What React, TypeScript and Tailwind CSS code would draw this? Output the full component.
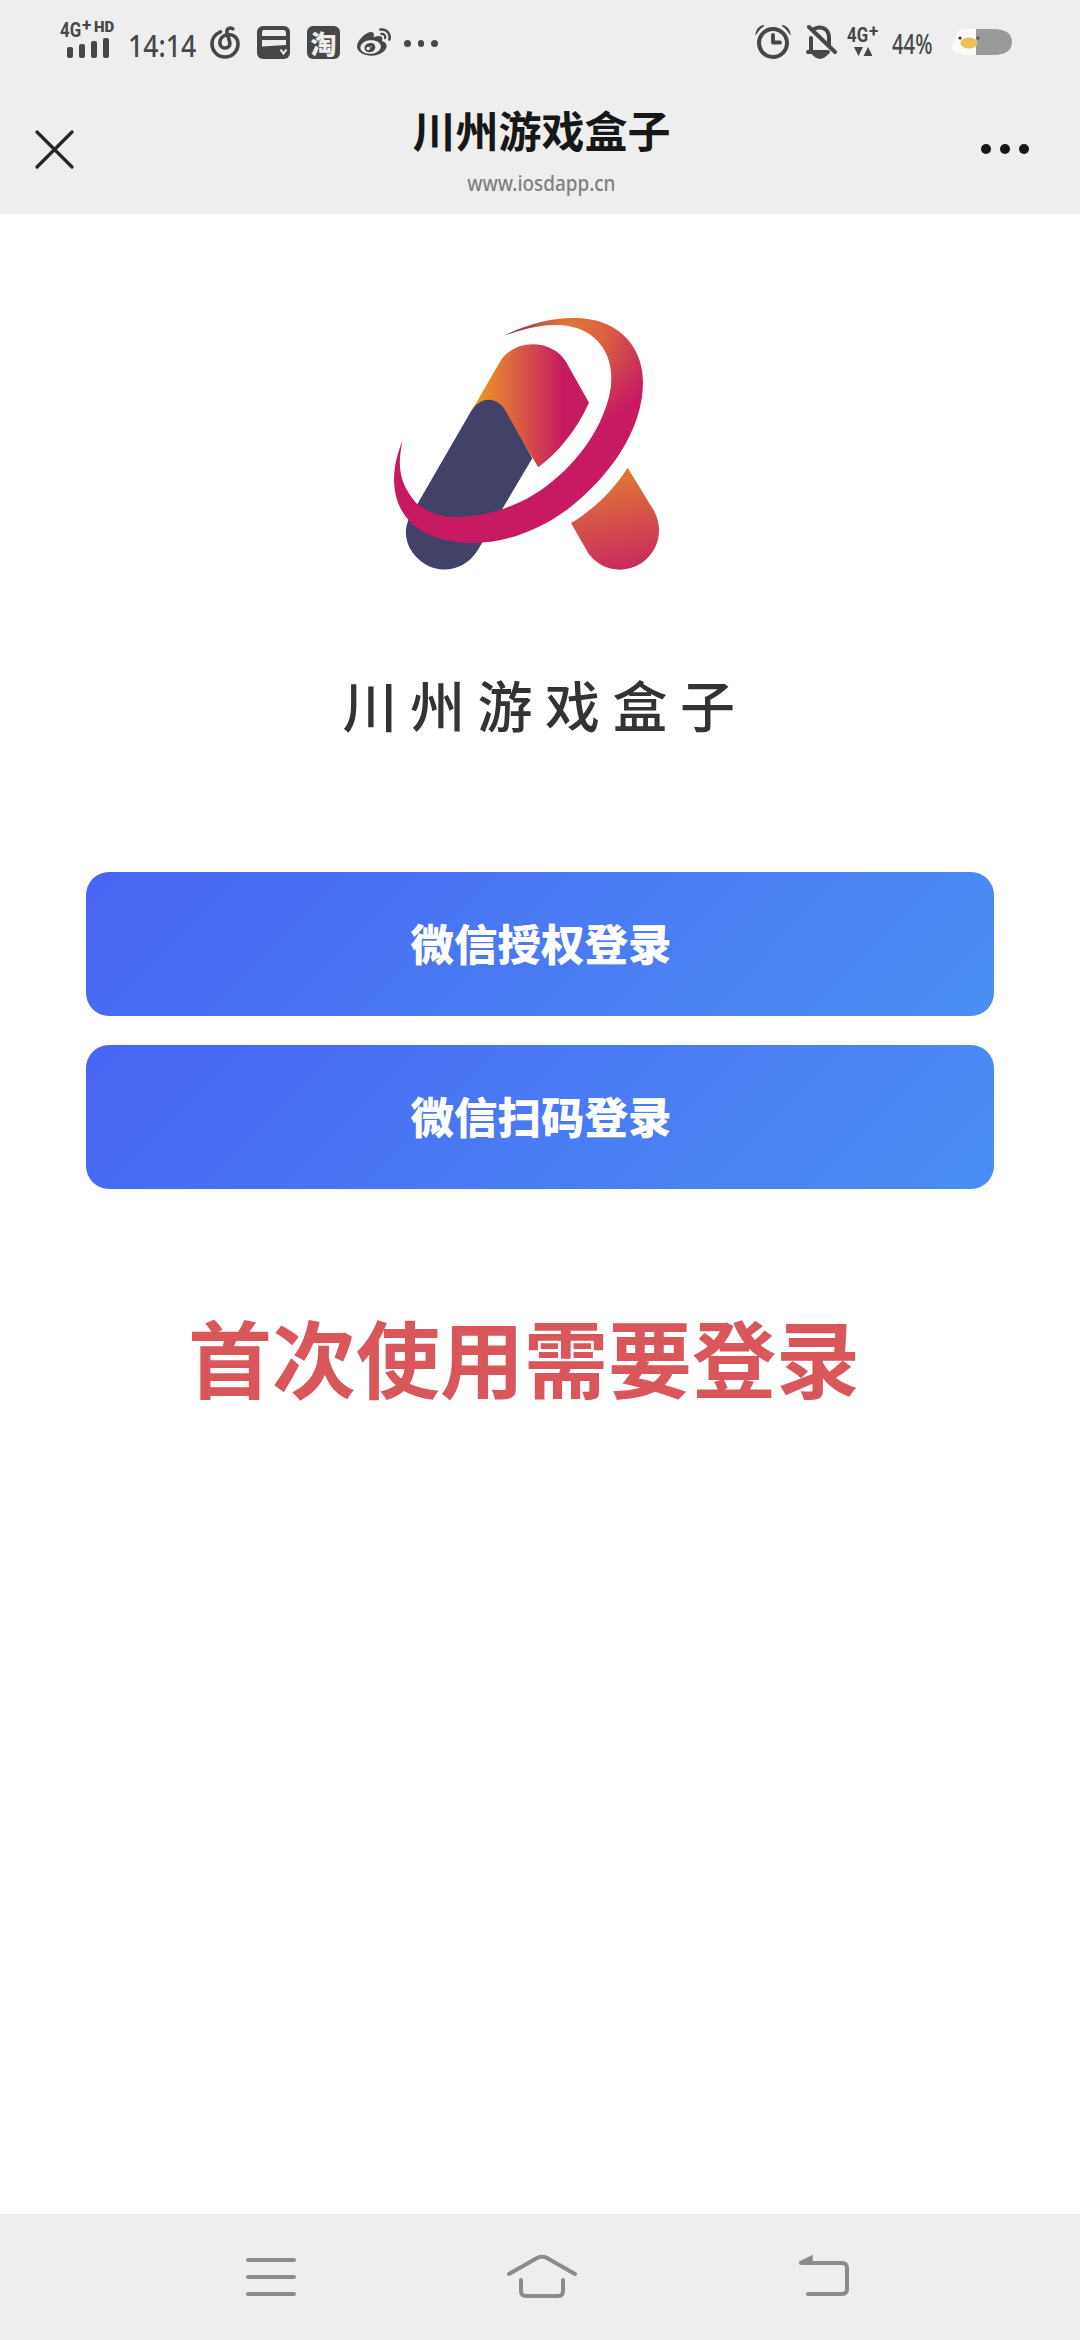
import { FC, ReactNode } from "react";
import { FaWeibo } from "react-icons/fa";

const hand = "font-['Noto_Sans_CJK_SC',sans-serif]";

const loginOptions = [{ label: "微信授权登录" }, { label: "微信扫码登录" }];

const SignalIcon: FC = () => (
  <svg width="42" height="20" viewBox="0 0 42 20" fill="#474747">
    <rect x="0" y="9" width="6" height="11" rx="2" />
    <rect x="12" y="6" width="6" height="14" rx="2" />
    <rect x="24" y="3" width="6" height="17" rx="2" />
    <rect x="36" y="0" width="6" height="20" rx="2" />
  </svg>
);

const MusicIcon: FC = () => (
  <svg
    width="30"
    height="33"
    viewBox="0 0 30 33"
    fill="none"
    stroke="#474747"
    strokeWidth="3.600"
    strokeLinecap="round"
  >
    <path d="M10.500 5.800C5 8 2 13 2 18A13 13 0 0 0 28 18C28 11.500 23 8 18 8.500C13 9 9.800 12.500 9.800 16.500C9.800 20 12 22 15 22C18.500 22 20.300 19.500 19.800 16.500L17 6.500C16.200 3 19.500 .900 22.800 2.800" />
  </svg>
);

const CardIcon: FC = () => (
  <svg width="33" height="33" viewBox="0 0 33 33">
    <rect width="33" height="33" rx="6" fill="#474747" />
    <path d="M7 4h19q3 0 3 3v3H5V7q0-3 2-3zM5 14h24v5L5 20.500z" fill="#eee" />
    <path d="M23.500 23.500l3 4 3-4" stroke="#eee" strokeWidth="2" fill="none" />
  </svg>
);

const AlarmIcon: FC = () => (
  <svg
    width="36"
    height="36"
    viewBox="0 0 36 36"
    fill="none"
    stroke="#474747"
    strokeWidth="4"
    strokeLinecap="round"
  >
    <circle cx="18" cy="19" r="14" />
    <path d="M18 11v7.500h7" strokeWidth="3.800" strokeLinejoin="round" />
    <path d="M1 10Q2 2 9 1.500Q5 4 1 10zM35 10Q34 2 27 1.500Q31 4 35 10z" fill="#474747" stroke="#474747" strokeWidth="1" />
  </svg>
);

const MutedBellIcon: FC = () => (
  <svg
    width="32"
    height="36"
    viewBox="0 0 32 36"
    fill="none"
    stroke="#474747"
    strokeWidth="4"
    strokeLinecap="round"
  >
    <path d="M6 27V14M9 5Q15 2 20 5Q24 8 24 14V21M3 28H23" />
    <path d="M9 31Q15 37 21 31z" fill="#474747" strokeWidth="2" />
    <path d="M4 3L30 28" strokeWidth="4" />
  </svg>
);

const BatteryIcon: FC = () => (
  <svg width="62" height="28" viewBox="0 0 62 28">
    <path d="M26 1H15C8 1 5 5 4 12C1 16 0 19 2 22C7 27 15 27 26 27z" fill="#fafafa" />
    <path d="M25 1H42C55 1 61 6 61 14S55 27 42 27H25z" fill="#999" />
    <ellipse cx="18" cy="15" rx="8.500" ry="5.600" fill="#ebc255" />
    <circle cx="9" cy="10" r="1.600" fill="#333" />
    <circle cx="27" cy="10" r="1.600" fill="#555" />
  </svg>
);

const StatusBar: FC = () => (
  <div className="flex h-20 justify-between pr-[67px] pl-[60px] text-[#474747]">
    <div className="flex">
      <div className="w-[57px] pt-[21px]">
        <div className="flex h-[17px] items-start font-['Roboto',sans-serif] font-bold whitespace-nowrap">
          <span className="w-[22px] origin-left scale-x-[.84] text-[20px] leading-[18px]">4G</span>
          <span className="w-[12px] text-[17px] leading-[8px]">+</span>
          <span className="text-[15px] leading-[13px] font-black">HD</span>
        </div>
        <div className="pl-[7px]">
          <SignalIcon />
        </div>
      </div>
      <div className="ml-[11px] w-[82px] pt-[28px]">
        <span className="inline-block origin-left scale-x-[.86] font-['Noto_Sans',sans-serif] text-[31px] leading-[34px] font-medium">
          14:14
        </span>
      </div>
      <div className="flex gap-[17px] pt-[26px]">
        <MusicIcon />
        <CardIcon />
        <div
          className={`flex size-[33px] items-center justify-center rounded-[6px] bg-[#474747] text-[26px] font-black text-[#eee] ${hand}`}
        >
          淘
        </div>
        <FaWeibo className="size-[34px]" />
      </div>
      <div className="flex gap-[7px] pt-[40px] pl-[13px]">
        <span className="size-[6.500px] rounded-full bg-[#474747]" />
        <span className="size-[6.500px] rounded-full bg-[#474747]" />
        <span className="size-[6.500px] rounded-full bg-[#474747]" />
      </div>
    </div>
    <div className="flex">
      <div className="pt-[24px]">
        <AlarmIcon />
      </div>
      <div className="pt-[24px] pl-[14px]">
        <MutedBellIcon />
      </div>
      <div className="w-[55px] pt-[25px] pl-[10px] font-['Roboto',sans-serif] font-bold">
        <div className="flex h-[22px] items-start">
          <span className="w-[22px] origin-left scale-x-[.84] text-[20px] leading-[20px]">4G</span>
          <span className="text-[17px] leading-[12px]">+</span>
        </div>
        <svg className="ml-[7px]" width="18" height="9" viewBox="0 0 18 9" fill="#474747">
          <path d="M0 0h9L4.500 9zM9.500 9h9L14 0z" />
        </svg>
      </div>
      <div className="w-[59px] pt-[30px]">
        <span className="inline-block origin-left scale-x-[.75] font-['Noto_Sans',sans-serif] text-[27px] leading-[28px] font-medium">
          44%
        </span>
      </div>
      <div className="pt-[28px]">
        <BatteryIcon />
      </div>
    </div>
  </div>
);

const TitleBar: FC = () => (
  <header className="flex h-[134px] justify-between pr-[51px] pl-[35px]">
    <svg className="mt-[50px]" width="39" height="39" viewBox="0 0 39 39" stroke="#262626" strokeWidth="3.200">
      <path d="M2 2l35 35M37 2L2 37" strokeLinecap="round" />
    </svg>
    <div className="ml-[28px] flex flex-col items-center">
      <h1 className={`mt-[26px] text-[43px] leading-[46px] font-semibold text-[#171717] ${hand}`}>
        川州游戏盒子
      </h1>
      <p className="mt-[18px] scale-x-[.9] font-['Noto_Sans',sans-serif] text-[21px] leading-[26px] font-medium text-[#808080]">
        www.iosdapp.cn
      </p>
    </div>
    <div className="mt-[64px] flex gap-[9px]">
      <span className="size-[10px] rounded-full bg-[#171717]" />
      <span className="size-[10px] rounded-full bg-[#171717]" />
      <span className="size-[10px] rounded-full bg-[#171717]" />
    </div>
  </header>
);

const Logo: FC = () => (
  <svg width="320" height="300" viewBox="0 0 960 900">
    <defs>
      <linearGradient id="top" x1="0" x2="1">
        <stop offset="0" stopColor="#ee9b22" />
        <stop offset=".35" stopColor="#dc6340" />
        <stop offset=".78" stopColor="#c61a61" />
      </linearGradient>
      <linearGradient id="leg" x1=".5" y1="0" x2=".65" y2="1">
        <stop offset="0" stopColor="#e17b32" />
        <stop offset="1" stopColor="#c9295f" />
      </linearGradient>
      <radialGradient id="ring" gradientUnits="userSpaceOnUse" cx="600" cy="120" r="290">
        <stop offset="0" stopColor="#e0743a" />
        <stop offset=".35" stopColor="#dc633f" />
        <stop offset=".7" stopColor="#cc3a54" />
        <stop offset="1" stopColor="#c81963" />
      </radialGradient>
      {/* dark fade on the upper tip of the ring */}
      <radialGradient id="tip" gradientUnits="userSpaceOnUse" cx="402" cy="137" r="170">
        <stop offset="0" stopColor="#45406a" />
        <stop offset="1" stopColor="#a03a66" stopOpacity="0" />
      </radialGradient>
    </defs>
    <path
      d="M308 357L390 215C432 145 545 145 588 215L657 338C620 420 565 486 505 532L400 360Z"
      fill="url(#top)"
    />
    <path
      d="M303 364C332 318 381 318 407 363L487 505L323 781C283 845 205 856 152 813C106 776 97 724 119 682Z"
      fill="#424167"
    />
    <path
      d="M773 533L853 664C883 724 863 784 815 819C758 855 692 841 655 790L603 699C670 660 730 600 773 533Z"
      fill="url(#leg)"
    />
    {["url(#ring)", "url(#tip)"].map((fill) => (
      <path
        key={fill}
        d="M402 137C480 98 560 82 615 84C735 84 818 160 819 275C819 420 720 560 590 660C500 725 400 760 305 759C160 755 72 690 72 565C73 525 83 485 98 452C80 530 89 582 139 640C170 667 215 681 260 681C330 680 385 663 430 645C540 600 640 500 690 395C720 330 726 290 723 245C715 160 650 105 560 105C510 103 450 120 402 137Z"
        fill={fill}
      />
    ))}
  </svg>
);

const LoginButton: FC<{ children: ReactNode }> = ({ children }) => (
  <button
    className={`h-36 w-full rounded-[23px] bg-[linear-gradient(135deg,#4865f3,#4a8ff3)] pb-[3px] pl-[2px] text-[43.500px] font-black text-white ${hand}`}
  >
    {children}
  </button>
);

const NavBar: FC = () => (
  <nav className="flex h-[126px] items-start justify-between bg-[#eee] pt-[40px] pr-[230px] pl-[245px]">
    <svg width="52" height="46" viewBox="0 0 52 46" fill="none" stroke="#8b8b8b" strokeWidth="4" strokeLinecap="round">
      <path d="M3 6H49M3 23H49M3 40H49" />
    </svg>
    <svg
      className="mr-[12px]"
      width="72"
      height="46"
      viewBox="0 0 72 46"
      fill="none"
      stroke="#8b8b8b"
      strokeWidth="4"
      strokeLinecap="round"
    >
      <path d="M3 20L31 4Q36 1.500 41 4L69 20" />
      <path d="M15 26V37Q15 42 20 42H52Q57 42 57 37V26" />
    </svg>
    <svg width="52" height="46" viewBox="0 0 52 46" fill="none" stroke="#8b8b8b" strokeWidth="4" strokeLinecap="round">
      <path d="M3 9H44Q49 9 49 14V35Q49 40 44 40H10" />
      <path d="M2 8L14 2V9H3z" fill="#8b8b8b" strokeWidth="1.500" />
    </svg>
  </nav>
);

const App: FC = () => {
  return (
    <div className="flex h-[2340px] w-[1080px] flex-col bg-white">
      <div className="bg-[#eee]">
        <StatusBar />
        <TitleBar />
      </div>

      {/* Login */}
      <main className="flex flex-1 flex-col px-[86px] pt-[76px]">
        <div className="pl-[284px]">
          <Logo />
        </div>
        <h2
          className={`mt-[78px] pl-[10px] text-center text-[55px] leading-[70px] font-medium tracking-[12.500px] text-[#333] ${hand}`}
        >
          川州游戏盒子
        </h2>
        <div className="mt-[134px] flex flex-col gap-[29px]">
          {loginOptions.map((option) => (
            <LoginButton key={option.label}>{option.label}</LoginButton>
          ))}
        </div>
        <p className={`mt-[117px] pl-[102px] text-[84px] leading-[100px] font-bold text-[#d9565b] ${hand}`}>
          首次使用需要登录
        </p>
      </main>

      <NavBar />
    </div>
  );
};

export default App;
